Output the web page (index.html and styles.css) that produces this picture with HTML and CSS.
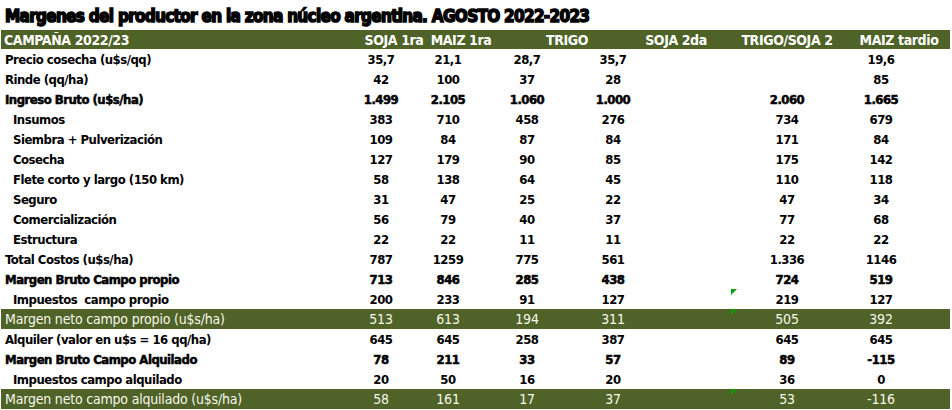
FILE: index.html
```html
<!DOCTYPE html>
<html lang="es">
<head>
<meta charset="utf-8">
<title>Margenes del productor</title>
<link rel="stylesheet" href="styles.css">
</head>
<body>
<div class="sheet">
  <h1 class="title">Margenes del productor en la zona núcleo argentina. AGOSTO 2022-2023</h1>
  <div class="row head">
    <div class="label">CAMPAÑA 2022/23</div>
    <div class="h">SOJA 1ra</div>
    <div class="h">MAIZ 1ra</div>
    <div class="h">TRIGO</div>
    <div class="h">SOJA 2da</div>
    <div class="h">TRIGO/SOJA 2</div>
    <div class="h">MAIZ tardio</div>
  </div>
  <div class="row"><div class="label">Precio cosecha (u$s/qq)</div><div class="n">35,7</div><div class="n">21,1</div><div class="n">28,7</div><div class="n">35,7</div><div class="n"></div><div class="n">19,6</div></div>
  <div class="row"><div class="label">Rinde (qq/ha)</div><div class="n">42</div><div class="n">100</div><div class="n">37</div><div class="n">28</div><div class="n"></div><div class="n">85</div></div>
  <div class="row strong"><div class="label">Ingreso Bruto (u$s/ha)</div><div class="n">1.499</div><div class="n">2.105</div><div class="n">1.060</div><div class="n">1.000</div><div class="n">2.060</div><div class="n">1.665</div></div>
  <div class="row"><div class="label sub">Insumos</div><div class="n">383</div><div class="n">710</div><div class="n">458</div><div class="n">276</div><div class="n">734</div><div class="n">679</div></div>
  <div class="row"><div class="label sub">Siembra + Pulverización</div><div class="n">109</div><div class="n">84</div><div class="n">87</div><div class="n">84</div><div class="n">171</div><div class="n">84</div></div>
  <div class="row"><div class="label sub">Cosecha</div><div class="n">127</div><div class="n">179</div><div class="n">90</div><div class="n">85</div><div class="n">175</div><div class="n">142</div></div>
  <div class="row"><div class="label sub">Flete corto y largo (150 km)</div><div class="n">58</div><div class="n">138</div><div class="n">64</div><div class="n">45</div><div class="n">110</div><div class="n">118</div></div>
  <div class="row"><div class="label sub">Seguro</div><div class="n">31</div><div class="n">47</div><div class="n">25</div><div class="n">22</div><div class="n">47</div><div class="n">34</div></div>
  <div class="row"><div class="label sub">Comercialización</div><div class="n">56</div><div class="n">79</div><div class="n">40</div><div class="n">37</div><div class="n">77</div><div class="n">68</div></div>
  <div class="row"><div class="label sub">Estructura</div><div class="n">22</div><div class="n">22</div><div class="n">11</div><div class="n">11</div><div class="n">22</div><div class="n">22</div></div>
  <div class="row"><div class="label">Total Costos (u$s/ha)</div><div class="n">787</div><div class="n">1259</div><div class="n">775</div><div class="n">561</div><div class="n">1.336</div><div class="n">1146</div></div>
  <div class="row strong"><div class="label">Margen Bruto Campo propio</div><div class="n">713</div><div class="n">846</div><div class="n">285</div><div class="n">438</div><div class="n">724</div><div class="n">519</div></div>
  <div class="row"><span class="flag"></span><div class="label sub">Impuestos&nbsp; campo propio</div><div class="n">200</div><div class="n">233</div><div class="n">91</div><div class="n">127</div><div class="n">219</div><div class="n">127</div></div>
  <div class="row green"><span class="flag"></span><div class="label">Margen neto campo propio (u$s/ha)</div><div class="n">513</div><div class="n">613</div><div class="n">194</div><div class="n">311</div><div class="n">505</div><div class="n">392</div></div>
  <div class="row"><div class="label">Alquiler (valor en u$s = 16 qq/ha)</div><div class="n">645</div><div class="n">645</div><div class="n">258</div><div class="n">387</div><div class="n">645</div><div class="n">645</div></div>
  <div class="row strong"><div class="label">Margen Bruto Campo Alquilado</div><div class="n">78</div><div class="n">211</div><div class="n">33</div><div class="n">57</div><div class="n">89</div><div class="n">-115</div></div>
  <div class="row"><div class="label sub">Impuestos campo alquilado</div><div class="n">20</div><div class="n">50</div><div class="n">16</div><div class="n">20</div><div class="n">36</div><div class="n">0</div></div>
  <div class="row green"><span class="flag"></span><div class="label">Margen neto campo alquilado (u$s/ha)</div><div class="n">58</div><div class="n">161</div><div class="n">17</div><div class="n">37</div><div class="n">53</div><div class="n">-116</div></div>
</div>
</body>
</html>
```
FILE: styles.css
```css
html, body {
  margin: 0;
  padding: 0;
  background: #ffffff;
}

.sheet {
  width: 949px;
  margin-left: 1px;
  font-family: "DejaVu Sans Condensed", "Liberation Sans", sans-serif;
  color: #000000;
}

.title {
  margin: 0;
  height: 30px;
  padding-left: 4px;
  box-sizing: border-box;
  font-size: 17px;
  line-height: 32px;
  font-weight: 700;
  letter-spacing: -0.7px;
  -webkit-text-stroke: 1.4px #000;
  white-space: nowrap;
}

.row {
  position: relative;
  display: flex;
  align-items: center;
  height: 20px;
  font-size: 13px;
  font-weight: 700;
  letter-spacing: -0.5px;
  white-space: nowrap;
}

.row.head {
  height: 19px;
  background: #4f6228;
  color: #ffffff;
  font-size: 14px;
  letter-spacing: -0.4px;
}

.row.green {
  background: #4f6228;
  color: #f7f7ea;
  font-weight: 400;
  font-size: 14px;
  letter-spacing: -0.2px;
}

.row.strong {
  -webkit-text-stroke: 0.5px #000;
}

.label {
  flex: none;
  width: 350px;
  padding-left: 4px;
  box-sizing: border-box;
}

.label.sub {
  padding-left: 12px;
}

.head .label {
  width: 363px;
  padding-left: 3px;
}

.n, .h {
  flex: none;
  width: 60px;
  display: flex;
  justify-content: center;
}

/* data column placement */
.row .n:nth-of-type(3) { margin-left: 7px; }
.row .n:nth-of-type(4) { margin-left: 19px; }
.row .n:nth-of-type(5) { margin-left: 26px; }
.row .n:nth-of-type(6) { margin-left: 114px; }
.row .n:nth-of-type(7) { margin-left: 34px; }

/* header column placement */
.head .h:nth-of-type(3) { margin-left: 7px; }
.head .h:nth-of-type(4) { margin-left: 46px; }
.head .h:nth-of-type(5) { margin-left: 49px; }
.head .h:nth-of-type(6) { margin-left: 51px; }
.head .h:nth-of-type(7) { margin-left: 52px; }

.flag {
  position: absolute;
  left: 730px;
  top: 0;
  width: 0;
  height: 0;
  border-top: 6px solid #08a008;
  border-right: 6px solid transparent;
  z-index: 1;
}
```
